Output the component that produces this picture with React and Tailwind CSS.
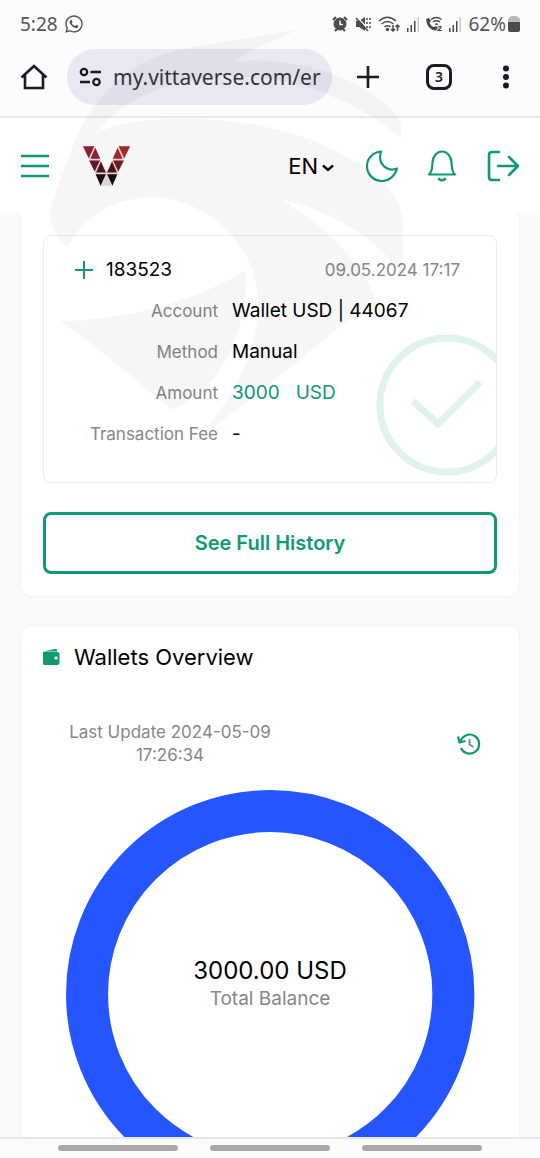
import React from 'react';
import { FaWhatsapp } from 'react-icons/fa';

const details = [
    { label: 'Account', value: 'Wallet USD | 44067' },
    { label: 'Method', value: 'Manual' },
    { label: 'Amount', value: '3000', currency: 'USD' },
    { label: 'Transaction Fee', value: '-' },
];

function SignalBars() {
    return (
        <svg className="w-3 h-4" viewBox="0 0 12 16" fill="#4b4b4b">
            <rect x="0" y="12" width="1.500" height="4" />
            <rect x="3.500" y="9" width="1.500" height="7" />
            <rect x="7" y="5" width="1.500" height="11" />
            <rect x="10.500" y="1" width="1.500" height="15" fill="#c9c9c9" />
        </svg>
    );
}

function StatusBar() {
    return (
        <div className="flex items-center justify-between px-5 h-12 text-[19px] leading-6 text-[#555]">
            <div className="flex items-center gap-[6px]">
                <span>5:28</span>
                <FaWhatsapp className="size-5" />
            </div>
            <div className="flex items-center gap-[6px]">
                <svg className="w-4 h-4" viewBox="0 0 16 16" fill="none" stroke="#4b4b4b">
                    <circle cx="8" cy="8" r="6" fill="#4b4b4b" />
                    <path d="M1 4l3-3M15 4l-3-3M3 15l2-2M13 15l-2-2" strokeWidth="2" />
                    <path d="M8 4.500v4h3" stroke="#fcfbfe" strokeWidth="1.500" />
                </svg>
                <svg className="w-4 h-4 ml-px" viewBox="0 0 16 16" fill="none" stroke="#4b4b4b">
                    <path d="M1 5h3l6-4v14l-6-4H1z" fill="#4b4b4b" stroke="none" />
                    <path d="M2 1l12 13" stroke="#fcfbfe" strokeWidth="1.500" />
                    <path d="M1 2l12 13" strokeWidth="1.500" />
                    <path d="M12 2v10M15 2v12" strokeWidth="1.500" strokeDasharray="2 2" />
                </svg>
                <svg className="w-6 h-4" viewBox="0 0 24 16" fill="none" stroke="#4b4b4b" strokeWidth="1.500">
                    <path d="M2 5q8.500-7.500 17 0M4.500 8q6-5 12 0M7.500 11q3-2.500 6 0" />
                    <circle cx="10.500" cy="13.500" r="1" fill="#4b4b4b" />
                    <path d="M16 9v6M14 13l2 2 2-2M20.500 15V9M18.500 11l2-2 2 2" />
                </svg>
                <SignalBars />
                <svg className="w-[18px] h-4" viewBox="0 0 18 16" fill="none" stroke="#4b4b4b" strokeWidth="1.500">
                    <path d="M1 3l3-1 2 3-1.500 2q1.500 3 4.500 4l2-1 2 2-2 2.500Q2 14 1 3z" fill="#4b4b4b" stroke="none" />
                    <path d="M6 3.500q5-4 10.500 0M8 6q3.500-2.500 7 0M10 8.500q1.500-1 3 0" />
                    <path d="M13 11q3-1.500 3 .5L13 14.500h4" strokeWidth="1.200" />
                </svg>
                <SignalBars />
                <span className="ml-px">62%</span>
                <svg className="w-3 h-4 -ml-1" viewBox="0 0 12 16">
                    <path d="M3 0h6v1h1l2 2v3H0V3l2-2h1z" fill="#b9b9b9" />
                    <path d="M0 6h12v8q0 2-2 2H2q-2 0-2-2z" fill="#4b4b4b" />
                </svg>
            </div>
        </div>
    );
}

function BrowserBar() {
    return (
        <div className="flex items-center pl-5 pr-[25px] pb-[11px] h-[68px] text-[#1b1b1f]">
            <button type="button" aria-label="Home">
                <svg className="size-7" viewBox="0 0 28 28" fill="none" stroke="currentColor" strokeWidth="2.600">
                    <path d="M5 12v13h18V12M1.500 14.500L14 3l12.500 11.500" />
                </svg>
            </button>
            <div className="flex items-center gap-[11px] flex-1 min-w-0 h-14 ml-[19px] pl-3 pr-2.5 rounded-full bg-[#e9e7f1]">
                <svg className="w-[23px] h-5 shrink-0" viewBox="0 0 23 20" fill="none" stroke="currentColor" strokeWidth="2.300">
                    <circle cx="5" cy="5" r="3.200" />
                    <path d="M11.500 5H22M1 15h10" />
                    <circle cx="17.500" cy="15" r="3.200" />
                </svg>
                <input
                    type="text"
                    aria-label="Address"
                    readOnly
                    defaultValue="my.vittaverse.com/er"
                    className="w-full min-w-0 bg-transparent text-[21px] leading-7 text-[#35343a] focus:outline-none"
                />
            </div>
            <button type="button" aria-label="New tab" className="ml-6">
                <svg className="size-6" viewBox="0 0 24 24" fill="none" stroke="currentColor" strokeWidth="2.600">
                    <path d="M12 1v22M1 12h22" />
                </svg>
            </button>
            <button
                type="button"
                aria-label="Open tabs"
                className="flex items-center justify-center size-[26px] ml-[46px] border-[3px] border-[#1b1b1f] rounded-lg text-sm font-semibold"
            >
                3
            </button>
            <button type="button" aria-label="Menu" className="ml-[45px]">
                <svg className="w-[18px] h-6" viewBox="0 0 18 24" fill="currentColor">
                    <circle cx="9" cy="3.500" r="3" />
                    <circle cx="9" cy="12" r="3" />
                    <circle cx="9" cy="20.500" r="3" />
                </svg>
            </button>
        </div>
    );
}

function Logo() {
    return (
        <svg className="w-[49px] h-10" viewBox="246 92 148 122">
            <path d="M248 93h35l37 78 37-78h35l-54 120h-36z" fill="#f0dcdc" />
            <g fill="#8e2530">
                <path d="M248 93h35l-17 36z" />
                <path d="M392 93h-35l17 36z" fill="#a32a2c" />
                <path d="M286 97l15 34h-30z" />
                <path d="M354 97l-15 34h30z" fill="#a32a2c" />
            </g>
            <g fill="#611a31">
                <path d="M267 136h33l-16 34z" />
                <path d="M373 136h-33l16 34z" fill="#6f2024" />
                <path d="M303 139l15 34h-30z" fill="#4a1626" />
                <path d="M337 139l-15 34h30z" fill="#4a1518" />
            </g>
            <path d="M287 178h31l-16 35zM322 178h31l-15 35z" fill="#1d0c12" />
            <path d="M320 183l12 29h-24z" fill="#dedede" />
        </svg>
    );
}

function Header() {
    return (
        <header className="flex items-center justify-between pl-5 pr-[21px] h-[95px] bg-white shrink-0 text-[#0f9a73]">
            <div className="flex items-center gap-8">
                <button type="button" aria-label="Open menu">
                    <svg className="w-[30px] h-6" viewBox="0 0 30 24" fill="none" stroke="currentColor" strokeWidth="2.600">
                        <path d="M1 2h28M1 12h28M1 22h28" />
                    </svg>
                </button>
                <Logo />
            </div>
            <div className="flex items-center">
                <button type="button" className="flex items-center gap-1 text-[22px] leading-7 text-black">
                    EN
                    <svg className="w-3 h-2 mt-1" viewBox="0 0 12 8" fill="none" stroke="currentColor" strokeWidth="2.400">
                        <path d="M1 1.500l5 4.500 5-4.500" />
                    </svg>
                </button>
                <button type="button" aria-label="Dark mode" className="ml-8">
                    <svg className="size-8" viewBox="0 0 32 32" fill="none" stroke="currentColor" strokeWidth="2.200" strokeLinejoin="round">
                        <path d="M15 1.500C6 2.500 1 9 1 16c0 9 7 15 15 15 7 0 13-5 15-12.500C22 22 11 15 15 1.500z" />
                    </svg>
                </button>
                <button type="button" aria-label="Notifications" className="ml-[29px]">
                    <svg className="w-[30px] h-8" viewBox="0 0 30 32" fill="none" stroke="currentColor" strokeWidth="2.200" strokeLinejoin="round" strokeLinecap="round">
                        <path d="M2 24.500h26c-3.500-3-3-7-3.500-12C24 6 20 1.500 15 1.500S6 6 5.500 12.500C5 17.500 5.500 21.500 2 24.500z" />
                        <path d="M12 29q3 2.500 6 0" strokeWidth="2.600" />
                    </svg>
                </button>
                <button type="button" aria-label="Log out" className="ml-[30px]">
                    <svg className="size-8" viewBox="0 0 32 32" fill="none" stroke="currentColor" strokeWidth="2.600" strokeLinecap="round" strokeLinejoin="round">
                        <path d="M12 2H5Q2 2 2 5v22q0 3 3 3h7" />
                        <path d="M11 16h19M22 7l9 9-9 9" />
                    </svg>
                </button>
            </div>
        </header>
    );
}

function HistoryCard() {
    return (
        <section className="px-[22px] py-[22px] bg-white border border-t-0 border-[#f3f3f3] rounded-b-xl">
            <div className="relative overflow-hidden h-[248px] border border-[#ececec] rounded-lg">
                <div className="flex items-center justify-between pl-[30px] pr-9 pt-5">
                    <div className="flex items-center gap-3 text-[19px] leading-7 text-black">
                        <svg className="size-5" viewBox="0 0 20 20" fill="none" stroke="#0f9a73" strokeWidth="2">
                            <path d="M10 1v18M1 10h18" />
                        </svg>
                        183523
                    </div>
                    <span className="text-[17px] leading-7 text-[#868686]">09.05.2024 17:17</span>
                </div>
                <dl className="grid grid-cols-[174px_1fr] gap-x-[14px] gap-y-[13px] pt-[13px]">
                    {details.map((row) => (
                        <React.Fragment key={row.label}>
                            <dt className="text-[17px] leading-7 text-right text-[#868686]">{row.label}</dt>
                            <dd className={row.currency ? 'text-[19px] leading-7 text-[#0f9a73]' : 'text-[19px] leading-7 text-black'}>
                                {row.value}
                                {row.currency && <span className="ml-4">{row.currency}</span>}
                            </dd>
                        </React.Fragment>
                    ))}
                </dl>
                {/* Completed mark, cut off by the box edge */}
                <svg className="absolute -right-[22px] bottom-[6px] size-[142px]" viewBox="0 0 142 142" fill="none" stroke="#dff2ec">
                    <circle cx="71" cy="71" r="67" strokeWidth="7" />
                    <path d="M37 67l25 23 42-42" strokeWidth="7" />
                </svg>
            </div>
            <button
                type="button"
                className="block w-full h-[62px] mt-[29px] border-[3px] border-[#0f9a73] rounded-lg text-xl font-semibold text-[#0f9a73]"
            >
                See Full History
            </button>
        </section>
    );
}

function WalletsCard() {
    return (
        <section className="mt-7 px-[21px] pt-[17px] pb-10 bg-white border border-[#f3f3f3] rounded-xl">
            <h2 className="flex items-center gap-[14px] text-[22px] leading-7 text-black">
                <svg className="w-[18px] h-[18px]" viewBox="0 0 18 18" fill="#0f9a73">
                    <path d="M1 3.500l12-2.500q2-.5 2 1v1.500z" />
                    <path d="M2 4h13.500Q17.500 4 17.500 6v9q0 2-2 2h-13Q1 17 1 15.500V4z" />
                    <circle cx="14" cy="10" r="1.700" fill="#e8f6f2" />
                </svg>
                Wallets Overview
            </h2>
            <div className="flex items-center justify-between pt-[50px] pl-4 pr-[17px]">
                <p className="w-[224px] text-[17px] leading-[23px] text-center text-[#868686]">
                    Last Update 2024-05-09 17:26:34
                </p>
                <button type="button" aria-label="Refresh history">
                    <svg className="w-6 h-[22px]" viewBox="0 0 24 22" fill="none" stroke="#0f9a73" strokeWidth="2.200">
                        <path d="M3.500 8.500A9.500 9.500 0 1 1 4 15" />
                        <path d="M1 3.500l1.500 6 6-1.500" />
                        <path d="M12.500 6v5.500l4 2.500" stroke="#5f8f82" strokeWidth="1.800" />
                    </svg>
                </button>
            </div>
            <div className="grid place-items-center mt-[22px]">
                <svg className="col-start-1 row-start-1 w-[90%] aspect-square" viewBox="0 0 410 410" fill="none">
                    <circle cx="205" cy="205" r="183" stroke="#2455ff" strokeWidth="42" />
                </svg>
                <div className="col-start-1 row-start-1 pb-[18px] text-center">
                    <p className="text-2xl leading-7 text-black">3000.00 USD</p>
                    <p className="text-[19px] leading-7 text-[#868686]">Total Balance</p>
                </div>
            </div>
        </section>
    );
}

// Faint eagle emblem laid over the top of the screen
function Watermark() {
    return (
        <svg className="absolute left-0 top-0 w-[540px] h-[460px] pointer-events-none" viewBox="0 0 540 460" fill="#000" fillOpacity="0.035">
            <path d="M50 215C56 185 66 165 74 143C84 116 105 88 135 67C175 42 245 42 298 29C275 41 250 49 232 62C295 54 375 80 401 122V138C345 90 270 70 205 78C150 86 118 106 97 132C160 108 270 118 330 148C375 170 404 195 403 225V275C375 238 335 212 282 200C322 223 362 262 375 298C310 350 260 395 200 436C235 395 258 352 258 305C258 238 200 197 150 197C105 200 80 222 68 248C58 240 51 228 50 215Z" />
            <path d="M60 321C125 320 190 304 246 270C248 330 225 385 172 410C130 375 95 345 60 321Z" />
        </svg>
    );
}

export default function App() {
    return (
        <div className="relative flex flex-col h-screen overflow-hidden bg-[#fafafa] font-['Inter',sans-serif]">
            <div className="shrink-0 bg-[#fcfbfd] border-b-2 border-[#e8e8ea] font-['Noto_Sans',sans-serif]">
                <StatusBar />
                <BrowserBar />
            </div>
            <Header />
            <main className="flex-1 min-h-0 overflow-hidden px-5">
                <HistoryCard />
                <WalletsCard />
            </main>
            <nav className="flex items-center justify-center gap-8 h-[21px] shrink-0 pb-px bg-[#fcfbfd] border-t-2 border-[#e6e6ee]">
                <button type="button" aria-label="Recent apps" className="w-[120px] h-[6px] rounded-full bg-[#a9a9a9]" />
                <button type="button" aria-label="Home screen" className="w-[120px] h-[6px] rounded-full bg-[#a9a9a9]" />
                <button type="button" aria-label="Back" className="w-[120px] h-[6px] rounded-full bg-[#a9a9a9]" />
            </nav>
            <Watermark />
        </div>
    );
}
